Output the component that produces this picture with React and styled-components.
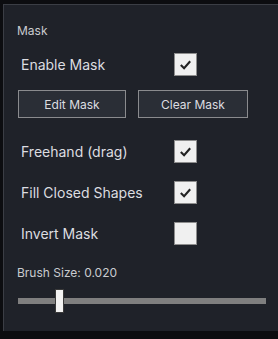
import styled, { createGlobalStyle } from "styled-components";

const GlobalStyle = createGlobalStyle`
  html, body {
    margin: 0;
    padding: 0;
    background: #0c0d10;
    overflow: hidden;
  }
  body {
    font-family: Inter, "Noto Sans", sans-serif;
  }
`;

const Panel = styled.div`
  margin: 4px 0 0 3px;
  height: 327px;
  box-sizing: border-box;
  background: #1f2229;
  border-top: 1px solid #3b3e45;
  border-left: 1px solid #3b3e45;
  padding: 18px 0 0 13px;
  display: flex;
  flex-direction: column;
`;

const Heading = styled.div`
  font-size: 12px;
  line-height: 16px;
  color: #c9cbcf;
`;

const Row = styled.label`
  display: flex;
  align-items: center;
  height: 23px;
  margin-top: ${(p) => p.$top}px;
  padding-left: 4px;
`;

const RowLabel = styled.span`
  width: 153px;
  font-size: 14px;
  color: #dcdde0;
`;

const Box = styled.span`
  width: 23px;
  height: 23px;
  box-sizing: border-box;
  background: #f0f0f0;
  border: 1px solid #8d8d8d;
  display: flex;
  align-items: center;
  justify-content: center;
`;

const Buttons = styled.div`
  display: flex;
  gap: 12px;
  margin-top: 14px;
  padding-left: 1px;
`;

const Button = styled.button`
  width: ${(p) => p.$w}px;
  height: 28px;
  box-sizing: border-box;
  background: #2a2e36;
  border: 1px solid #8a8b8e;
  color: #dcdde0;
  font-family: Inter, "Noto Sans", sans-serif;
  font-size: 12px;
  padding: 0;
`;

const SliderLabel = styled.div`
  margin-top: 20px;
  font-size: 12px;
  line-height: 16px;
  color: #c9cbcf;
`;

const Track = styled.div`
  position: relative;
  margin: 17px 0 0 1px;
  width: 248px;
  height: 6px;
  background: #7f7f7f;
`;

const Thumb = styled.div`
  position: absolute;
  top: -9px;
  left: ${(p) => p.$pos}px;
  width: 9px;
  height: 24px;
  box-sizing: border-box;
  background: #f2f2f2;
  border: 1px solid #3a3a3a;
`;

const Check = () => (
  <svg width="15" height="15" viewBox="0 0 16 16">
    <path d="M3 8.5 L6.5 12 L13 4.5" fill="none" stroke="#222" strokeWidth="2.2" />
  </svg>
);

const Toggle = ({ label, checked, top }) => (
  <Row $top={top}>
    <RowLabel>{label}</RowLabel>
    <Box>{checked && <Check />}</Box>
  </Row>
);

export default function App() {
  return (
    <>
      <GlobalStyle />
      <Panel>
        <Heading>Mask</Heading>
        <Toggle label="Enable Mask" checked top={14} />
        <Buttons>
          <Button $w={108}>Edit Mask</Button>
          <Button $w={110}>Clear Mask</Button>
        </Buttons>
        <Toggle label="Freehand (drag)" checked top={22} />
        <Toggle label="Fill Closed Shapes" checked top={18} />
        <Toggle label="Invert Mask" top={18} />
        <SliderLabel>Brush Size: 0.020</SliderLabel>
        <Track>
          <Thumb $pos={37} />
        </Track>
      </Panel>
    </>
  );
}
